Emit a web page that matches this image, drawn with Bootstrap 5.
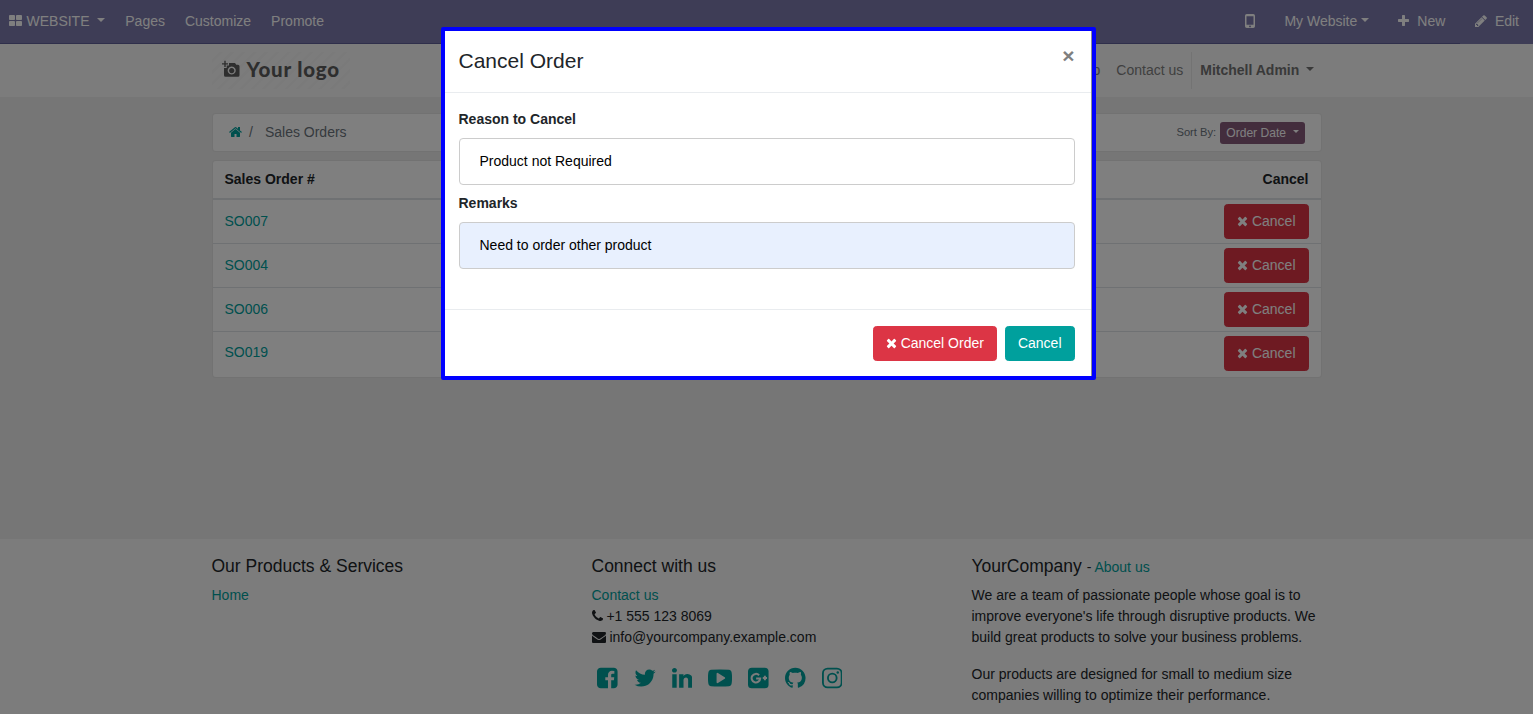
<!DOCTYPE html>
<html lang="en">
<head>
<meta charset="utf-8">
<title>Sales Orders | My Website</title>
<link href="https://cdn.jsdelivr.net/npm/bootstrap@5.3.0/dist/css/bootstrap.min.css" rel="stylesheet">
<style>
html{font-size:14px}
body{font-family:"Liberation Sans",Arial,sans-serif;font-size:14px;line-height:1.5;color:#212529;background:#f8f8f8;height:714px;overflow:hidden}
a{color:#00a09d;text-decoration:none}
.fa-i{height:1em;width:auto;fill:currentColor;vertical-align:-.143em;display:inline-block}
.page-box{width:1140px;margin:0 auto;padding:0 15px}
.topbar{height:44px;background:#7c7bad;border-bottom:1px solid #5f5e97;color:#fff;padding-left:9px}
.topbar>*{height:43px;padding-bottom:1px}
.topbar .grid-i{width:13px}
.edit-item{height:44px;background:#7c7bad;padding:0 14px 2px 15px;margin-bottom:-1px}
.site-head{height:53px;background:#f9f9f9}
.site-head .page-box{height:53px}
.logo{width:138px;height:37px;padding-left:10px;color:#5c5c5c;background:repeating-linear-gradient(135deg,#f9f9f9 0 5px,#f4f4f4 5.5px 7.5px,#f9f9f9 8px)}
.logo b{font:900 20.5px/1 Lato,sans-serif;letter-spacing:.8px;margin-left:7px;padding-bottom:3px}
.logo svg{margin-bottom:3px}
.menu{color:#808080}
.menu .user{border-left:1px solid #e6e6e6;height:37px;line-height:36px;padding-left:8px;padding-right:7.5px;margin-left:8px;font-weight:700;color:#737373}
.menu .user::after{margin-left:.2em}
.site-main{height:442px;background:#ececec;padding-top:16px}
.panel{background:#fff;border:1px solid rgba(0,0,0,.1);border-radius:4px}
.crumbs{height:39px;margin-bottom:8px;padding:0 16px}
.crumbs .txt{color:#6c757d;line-height:21px}
.sort-btn{background:#875a7b;color:#fff;font-size:12.1px;line-height:18px;padding:2px 6px;border-radius:3px;height:22px;border:0}
.orders{margin:0;--bs-table-bg:transparent;color:#212529;border-color:#dee2e6}
.orders th,.orders td{padding:0 12px;vertical-align:middle;box-shadow:none;color:#212529}
.orders th{height:38px;border-bottom:2px solid #dee2e6}
.orders td{height:44px;border-bottom:1px solid #dee2e6}
.orders tr:last-child td{border:0;height:46px;padding-bottom:3px}
.orders td:last-child{padding-top:1px}
.b-red,.b-teal{height:35px;padding:6px 12px;border:1px solid #dc3545;background:#dc3545;color:#fff;border-radius:3.5px;font-size:14px;line-height:21px;display:inline-block}
.b-teal{background:#00a09d;border-color:#00a09d}
.site-foot{background:#f8f8f8;padding-top:17px}
.site-foot .row{--bs-gutter-x:30px}
.site-foot h4{font-size:17.5px;line-height:21px;height:21px;margin:0 0 8px;font-weight:400}
.site-foot h4 small{font-size:14px}
.site-foot p{margin-bottom:16px}
.social{color:#00a09d;gap:16px;padding-left:5.500px;margin-top:18px}
.social svg{height:24px;fill:currentColor}
.modal-backdrop{--bs-backdrop-opacity:.5;opacity:.5}
.order-modal{padding-left:4px}
.order-modal .modal-dialog{width:655px;max-width:655px;margin:27px auto 0}
.order-modal .modal-content{height:353px;border:4px solid #00f;border-radius:2px;background:#fff;color:#212529;box-shadow:inset -1px 0 0 #909090}
.order-modal .modal-header{height:62px;padding:0 16.5px 0 13.5px;margin-right:1px;border-bottom:1px solid #e9ecef;align-items:flex-start}
.order-modal .modal-title{font-size:21px;line-height:30px;margin-top:15px;font-weight:400}
.x-close{font:700 21px/21px "Liberation Sans",Arial,sans-serif;color:#7f7f7f;background:none;border:0;padding:0;margin-top:14px}
.order-modal .modal-body{padding:16px 17.5px 0 13.5px}
.order-modal label{display:block;font-weight:700;line-height:21px;margin-bottom:8px}
.order-modal .form-control{height:47px;border:1px solid #ccc;border-radius:4px;padding:0 20px;font-size:14px;margin-bottom:8px;color:#000;background:#fff;padding-bottom:1px}
.order-modal .form-control.filled{background:#e8f0fe}
.order-modal .modal-footer{height:67px;padding:0 16.5px 0 0;margin-right:1px;border-top:1px solid #e9ecef;gap:8px}
.order-modal .modal-footer>*{margin:0}
</style>
</head>
<body>
<svg width="0" height="0" class="position-absolute">
<symbol id="times" viewBox="192 0 1408 1792"><path d="M1490 1322q0 40-28 68l-136 136q-28 28-68 28t-68-28l-294-294-294 294q-28 28-68 28t-68-28l-136-136q-28-28-28-68t28-68l294-294-294-294q-28-28-28-68t28-68l136-136q28-28 68-28t68 28l294 294 294-294q28-28 68-28t68 28l136 136q28 28 28 68t-28 68l-294 294 294 294q28 28 28 68z"/></symbol>
</svg>

<nav class="topbar d-flex align-items-center">
  <div class="d-flex align-items-center"><svg class="fa-i grid-i" viewBox="64 0 1664 1792"><path d="M832 1024v384q0 52-38 90t-90 38h-512q-52 0-90-38t-38-90v-384q0-52 38-90t90-38h512q52 0 90 38t38 90zm0-768v384q0 52-38 90t-90 38h-512q-52 0-90-38t-38-90v-384q0-52 38-90t90-38h512q52 0 90 38t38 90zm896 768v384q0 52-38 90t-90 38h-512q-52 0-90-38t-38-90v-384q0-52 38-90t90-38h512q52 0 90 38t38 90zm0-768v384q0 52-38 90t-90 38h-512q-52 0-90-38t-38-90v-384q0-52 38-90t90-38h512q52 0 90 38t38 90z"/></svg><span class="dropdown-toggle" style="margin-left:4.5px">WEBSITE&nbsp;</span></div>
  <div class="d-flex align-items-center" style="gap:20px;margin-left:20.300px"><span>Pages</span><span>Customize</span><span>Promote</span></div>
  <div class="d-flex align-items-center ms-auto">
    <svg width="10" height="14" viewBox="0 0 10 14"><path fill="#fff" fill-rule="evenodd" d="M1.8 0h6.4Q10 0 10 1.8v10.4Q10 14 8.2 14H1.8Q0 14 0 12.200V1.800Q0 0 1.800 0zM1.500 2.300v8.400h7V2.300zM5 11.500a.9.9 0 1 0 .01 0z"/></svg>
    <span class="dropdown-toggle" style="margin-left:29px">My Website</span>
    <svg class="fa-i" style="margin-left:29.500px" viewBox="192 0 1408 1792"><path d="M1600 736v192q0 40-28 68t-68 28h-416v416q0 40-28 68t-68 28h-192q-40 0-68-28t-28-68v-416h-416q-40 0-68-28t-28-68v-192q0-40 28-68t68-28h416v-416q0-40 28-68t68-28h192q40 0 68 28t28 68v416h416q40 0 68 28t28 68z"/></svg>
    <span style="margin:0 14.500px 0 8px">New</span>
  </div>
  <div class="edit-item d-flex align-items-center"><svg class="fa-i" viewBox="128 0 1536 1792"><path d="M491 1536l91-91-235-235-91 91v107h128v128h107zm523-928q0-22-22-22-10 0-17 7l-542 542q-7 7-7 17 0 22 22 22 10 0 17-7l542-542q7-7 7-17zm-54-192l416 416-832 832h-416v-416zm683 96q0 53-37 90l-166 166-416-416 166-165q36-38 90-38 53 0 91 38l235 234q37 39 37 91z"/></svg><span style="margin-left:8px">Edit</span></div>
</nav>

<header class="site-head"><div class="page-box d-flex align-items-center">
  <a href="#" class="logo d-flex align-items-center"><svg width="18" height="18" viewBox="0 0 18 18" fill="#5c5c5c"><path d="M0 3.200h2.300V.8h1.400v2.400H6v1.400H3.700V7H2.300V4.600H0z"/><path fill-rule="evenodd" d="M7 3h6l1.300 1.700H16q1.500 0 1.500 1.500v9q0 1.500-1.500 1.500H3.500Q2 16.700 2 15.200V8h2.700V5.600H7zM9.700 6.600a4 4 0 1 0 .01 0zM9.700 8a2.600 2.600 0 1 1-.01 0z"/></svg><b>Your logo</b></a>
  <div class="menu d-flex align-items-center ms-auto"><span class="me-3">Home</span><span style="margin-right:16px">Shop</span><span>Contact us</span><span class="user dropdown-toggle">Mitchell Admin&nbsp;</span></div>
</div></header>

<main class="site-main"><div class="page-box">
  <div class="panel crumbs d-flex align-items-center justify-content-between">
    <div class="txt"><a href="#"><svg class="fa-i" viewBox="64 0 1664 1792"><path d="M1472 992v480q0 26-19 45t-45 19h-384v-384h-256v384h-384q-26 0-45-19t-19-45v-480q0-1 .5-3t.5-3l575-474 575 474q1 2 1 6zm223-69l-62 74q-8 9-21 11h-3q-13 0-21-7l-692-577-692 577q-12 8-24 7-13-2-21-11l-62-74q-8-10-7-23.500t11-21.500l719-599q32-26 76-26t76 26l244 204v-195q0-14 9-23t23-9h192q14 0 23 9t9 23v408l219 182q10 8 11 21.500t-7 23.500z"/></svg></a><span style="margin:0 12px 0 7.500px">/</span>Sales Orders</div>
    <div class="d-flex align-items-center"><span style="font-size:11.200px;color:#6c757d;margin-right:4px">Sort By:</span><button class="sort-btn dropdown-toggle">Order Date&nbsp;</button></div>
  </div>
  <div class="panel">
    <table class="table orders">
      <thead><tr><th>Sales Order #</th><th class="text-end">Cancel</th></tr></thead>
      <tbody>
        <tr><td><a href="#">SO007</a></td><td class="text-end"><a href="#" class="b-red"><svg class="fa-i" viewBox="192 0 1408 1792"><use href="#times" x="192" width="1408" height="1792"/></svg> Cancel</a></td></tr>
        <tr><td><a href="#">SO004</a></td><td class="text-end"><a href="#" class="b-red"><svg class="fa-i" viewBox="192 0 1408 1792"><use href="#times" x="192" width="1408" height="1792"/></svg> Cancel</a></td></tr>
        <tr><td><a href="#">SO006</a></td><td class="text-end"><a href="#" class="b-red"><svg class="fa-i" viewBox="192 0 1408 1792"><use href="#times" x="192" width="1408" height="1792"/></svg> Cancel</a></td></tr>
        <tr><td><a href="#">SO019</a></td><td class="text-end"><a href="#" class="b-red"><svg class="fa-i" viewBox="192 0 1408 1792"><use href="#times" x="192" width="1408" height="1792"/></svg> Cancel</a></td></tr>
      </tbody>
    </table>
  </div>
</div></main>

<footer class="site-foot"><div class="page-box"><div class="row">
  <div class="col-4"><h4>Our Products &amp; Services</h4><a href="#">Home</a></div>
  <div class="col-4"><h4>Connect with us</h4>
    <div><a href="#">Contact us</a></div>
    <div><svg class="fa-i" viewBox="192 0 1408 1792"><path d="M1600 1240q0 27-10 70.500t-21 68.500q-21 50-122 106-94 51-186 51-27 0-52.500-3.500t-57.500-12.500-47.500-14.500-55.500-20.500-49-18q-98-35-175-83-128-79-264.500-215.500t-215.500-264.500q-48-77-83-175-3-9-18-49t-20.500-55.500-14.500-47.500-12.500-57.500-3.500-52.500q0-92 51-186 56-101 106-122 25-11 68.500-21t70.500-10q14 0 21 3 18 6 53 76 11 19 30 54t35 63.500 31 53.500q3 4 17.500 25t21.500 35.500 7 28.500q0 20-28.500 50t-62 55-62 53-28.500 46q0 9 5 22.500t8.500 20.500 14 24 11.500 19q76 137 174 235t235 174q2 1 19 11.500t24 14 20.500 8.500 22.500 5q18 0 46-28.500t53-62 55-62 50-28.500q14 0 28.500 7t35.500 21.500 25 17.500q25 15 53.500 31t63.500 35 54 30q70 35 76 53 3 7 3 21z"/></svg> +1 555 123 8069</div>
    <div><svg class="fa-i" viewBox="0 0 1792 1792"><path d="M1792 710v794q0 66-47 113t-113 47h-1472q-66 0-113-47t-47-113v-794q44 49 101 87 362 246 497 345 57 42 92.500 65.500t94.500 48 110 24.500h2q51 0 110-24.500t94.500-48 92.500-65.500q170-123 498-345 57-39 100-87zm0-294q0 79-49 151t-122 123q-376 261-468 325-10 7-42.500 31t-54 38.500-52 32.500-57.500 27-50 9h-2q-23 0-50-9t-57.500-27-52-32.500-54-38.500-42.500-31q-91-64-262-182.500t-205-142.500q-62-42-117-115.500t-55-136.500q0-78 41.500-130t118.500-52h1472q65 0 112.500 47t47.500 113z"/></svg> info@yourcompany.example.com</div>
    <div class="social d-flex">
      <svg viewBox="128 0 1536 1792"><path d="M1376 128q119 0 203.500 84.500t84.500 203.500v960q0 119-84.500 203.500t-203.500 84.500h-188v-595h199l30-232h-229v-148q0-56 23.500-84t91.500-28l122-1v-207q-63-9-178-9-136 0-217.500 80t-81.500 226v171h-200v232h200v595h-532q-119 0-203.500-84.500t-84.500-203.500v-960q0-119 84.500-203.500t203.500-84.500h960z"/></svg>
      <svg viewBox="64 0 1664 1792"><path d="M1684 408q-67 98-162 167 1 14 1 42 0 130-38 259.500t-115.500 248.500-184.500 210.500-258 146-323 54.500q-271 0-496-145 35 4 78 4 225 0 401-138-105-2-188-64.500t-114-159.500q33 5 61 5 43 0 85-11-112-23-185.500-111.500t-73.500-205.500v-4q68 38 146 41-66-44-105-115t-39-154q0-88 44-163 121 149 294.500 238.500t371.500 99.500q-8-38-8-74 0-134 94.500-228.500t228.500-94.500q140 0 236 102 109-21 205-78-37 115-142 178 93-10 186-50z"/></svg>
      <svg viewBox="128 0 1536 1792"><path d="M477 625v991h-330v-991h330zm21-306q1 73-50.500 122t-135.500 49h-2q-82 0-132-49t-50-122q0-74 51.500-122.500t134.500-48.500 133 48.500 51 122.500zm1166 729v568h-329v-530q0-105-40.500-164.500t-126.500-59.500q-63 0-105.500 34.500t-63.500 85.500q-11 30-11 81v553h-329q2-399 2-647t-1-296l-1-48h329v144h-2q20-32 41-56t56.500-52 87-43.500 114.500-15.500q171 0 275 113.500t104 332.500z"/></svg>
      <svg viewBox="0 0 1792 1792"><path d="M1280 896q0-37-30-54l-512-320q-31-20-65-2-33 18-33 56v640q0 38 33 56 16 8 31 8 20 0 34-10l512-320q30-17 30-54zm512 0q0 96-1 150t-8.500 136.500-22.500 147.500q-16 73-69 123t-124 58q-222 25-671 25t-671-25q-71-8-124.500-58t-69.500-123q-14-65-21.500-147.500t-8.500-136.500-1-150 1-150 8.500-136.500 22.500-147.500q16-73 69-123t124-58q222-25 671-25t671 25q71 8 124.500 58t69.500 123q14 65 21.500 147.500t8.500 136.500 1 150z"/></svg>
      <svg viewBox="128 0 1536 1792"><rect x="128" y="128" width="1536" height="1536" rx="288"/><path d="M955 690A320 320 0 1 0 1040 925H735M1390 735v320M1230 895h320" fill="none" stroke="#f8f8f8" stroke-width="150"/></svg>
      <svg viewBox="0 -1.333 16 18.667"><path d="M8 0C3.580 0 0 3.580 0 8c0 3.540 2.290 6.530 5.470 7.590.4.070.55-.17.55-.38 0-.19-.01-.82-.01-1.490-2.010.37-2.530-.49-2.690-.94-.09-.23-.48-.94-.82-1.130-.28-.15-.68-.52-.01-.53.63-.01 1.080.58 1.230.82.72 1.210 1.870.87 2.330.66.070-.52.28-.87.51-1.070-1.780-.2-3.640-.89-3.640-3.950 0-.87.31-1.590.82-2.150-.08-.2-.36-1.020.080-2.120 0 0 .67-.21 2.200.82.64-.18 1.320-.27 2-.27s1.360.090 2 .27c1.530-1.040 2.200-.82 2.200-.82.44 1.100.16 1.920.080 2.120.51.56.82 1.270.82 2.150 0 3.070-1.870 3.750-3.650 3.950.29.25.54.73.54 1.480 0 1.070-.01 1.930-.01 2.200 0 .21.15.46.55.38A8.010 8.010 0 0 0 16 8c0-4.420-3.580-8-8-8"/></svg>
      <svg viewBox="128 0 1536 1792"><rect x="197" y="197" width="1398" height="1398" rx="350" fill="none" stroke="currentColor" stroke-width="138"/><circle cx="896" cy="896" r="325" fill="none" stroke="currentColor" stroke-width="138"/><circle cx="1306" cy="486" r="92"/></svg>
    </div>
  </div>
  <div class="col-4"><h4>YourCompany <small>- <a href="#">About us</a></small></h4>
    <p>We are a team of passionate people whose goal is to improve everyone's life through disruptive products. We build great products to solve your business problems.</p>
    <p>Our products are designed for small to medium size companies willing to optimize their performance.</p>
  </div>
</div></div></footer>

<div class="modal-backdrop"></div>
<div class="modal order-modal d-block overflow-hidden" tabindex="-1"><div class="modal-dialog"><div class="modal-content">
  <div class="modal-header"><h4 class="modal-title">Cancel Order</h4><button class="x-close" type="button">×</button></div>
  <div class="modal-body">
    <label for="reason">Reason to Cancel</label><input id="reason" class="form-control" value="Product not Required">
    <label for="remarks">Remarks</label><input id="remarks" class="form-control filled" value="Need to order other product">
  </div>
  <div class="modal-footer"><button class="b-red"><svg class="fa-i" viewBox="192 0 1408 1792"><use href="#times" x="192" width="1408" height="1792"/></svg> Cancel Order</button><button class="b-teal">Cancel</button></div>
</div></div></div>
<script src="https://cdn.jsdelivr.net/npm/bootstrap@5.3.0/dist/js/bootstrap.bundle.min.js"></script>
</body>
</html>
